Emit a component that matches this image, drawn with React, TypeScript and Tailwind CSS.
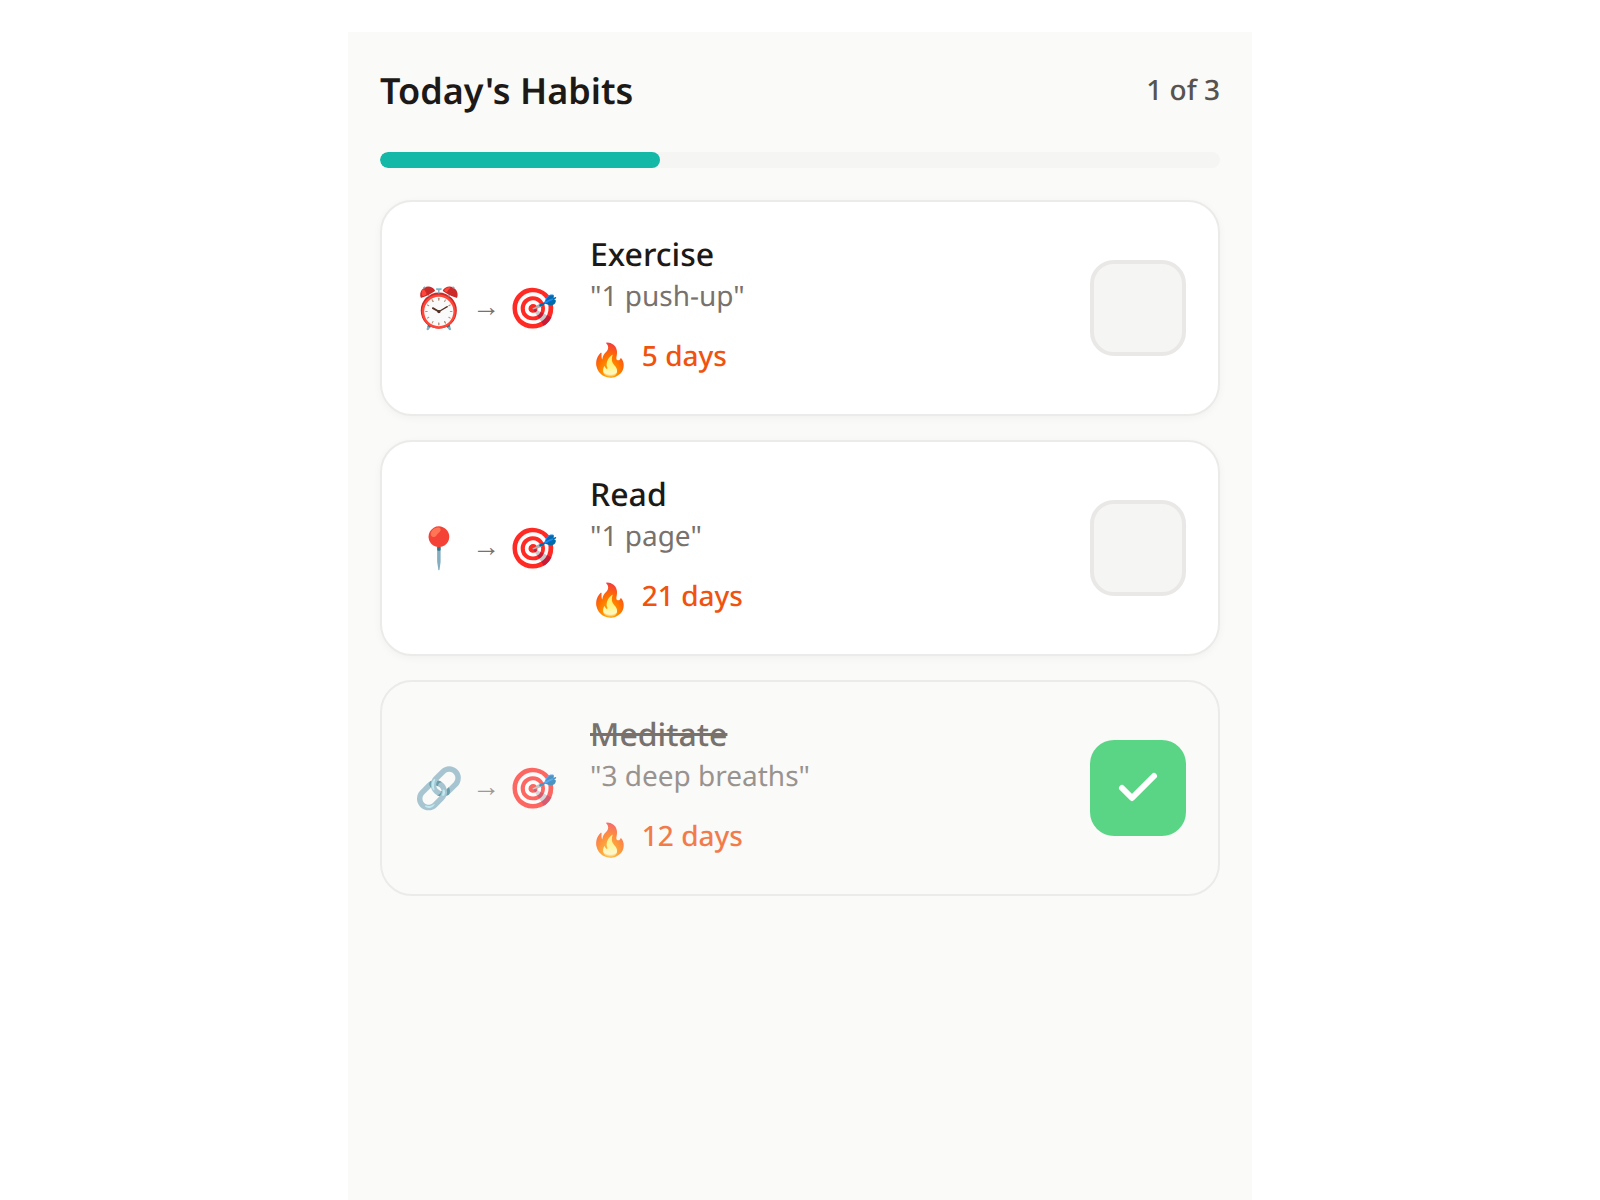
import { Check } from "lucide-react";

const font = { fontFamily: '"Noto Sans", sans-serif' };
function Card({ emoji, name, sub, days, done }: { emoji: string; name: string; sub: string; days: string; done?: boolean }) {
  return (
    <div className={`flex items-center gap-8 rounded-[32px] border-2 border-[#ecebe9] p-8 ${done ? "bg-[#fafaf9]" : "bg-white shadow-[0_2px_8px_rgba(0,0,0,0.04)]"}`}>
      <div className={`mb-[2px] flex w-[144px] items-center gap-[8.5px] ${done ? "opacity-70" : ""}`}>
        <span className="text-[40px]">{emoji}</span>
        <span className="mb-[2px] text-[28px] text-[#78716c]">→</span>
        <span className="text-[40px]">🎯</span>
      </div>
      <div className="min-w-0 flex-1">
        <div className={`text-[32px] leading-[42px] font-medium ${done ? "text-[#78716c] line-through" : "text-[#1c1917]"}`}>{name}</div>
        <div className={`text-[28px] leading-[40px] text-[#78716c] ${done ? "opacity-75" : ""}`}>{sub}</div>
        <div className={`mt-[15px] mb-px flex h-[50px] items-center gap-3 ${done ? "opacity-75" : ""}`}>
          <span className="mt-2 text-[32px]">🔥</span>
          <span className="text-[28px] font-medium text-[#f0530f]">{days}</span>
        </div>
      </div>
      {done ? (
        <div className="flex h-24 w-24 shrink-0 items-center justify-center rounded-[24px] bg-[#5ad586]">
          <Check size={48} strokeWidth={3} color="white" />
        </div>
      ) : (
        <div className="h-24 w-24 shrink-0 rounded-[24px] border-4 border-[#e9e8e6] bg-[#f5f5f4]" />
      )}
    </div>
  );
}
export default function App() {
  return (
    <div className="flex min-h-[1200px] justify-center bg-white pt-8 [text-rendering:geometricPrecision]" style={font}>
      <div className="w-[904px] bg-[#fafaf9] p-8">
        <div className="mb-[34px] flex items-center justify-between">
          <div className="text-[36px] font-semibold text-[#1c1917]">Today's Habits</div>
          <div className="pb-[2px] text-[28px] font-medium text-[#57534e]">1 of 3</div>
        </div>
        <div className="mb-8 h-4 overflow-hidden rounded-lg bg-[#f5f5f4]">
          <div className="h-full w-1/3 rounded-lg bg-[#14b8a6]" />
        </div>
        <div className="flex flex-col gap-6">
          <Card emoji="⏰" name="Exercise" sub={'"1 push-up"'} days="5 days" />
          <Card emoji="📍" name="Read" sub={'"1 page"'} days="21 days" />
          <Card emoji="🔗" name="Meditate" sub={'"3 deep breaths"'} days="12 days" done />
        </div>
      </div>
    </div>
  );
}
